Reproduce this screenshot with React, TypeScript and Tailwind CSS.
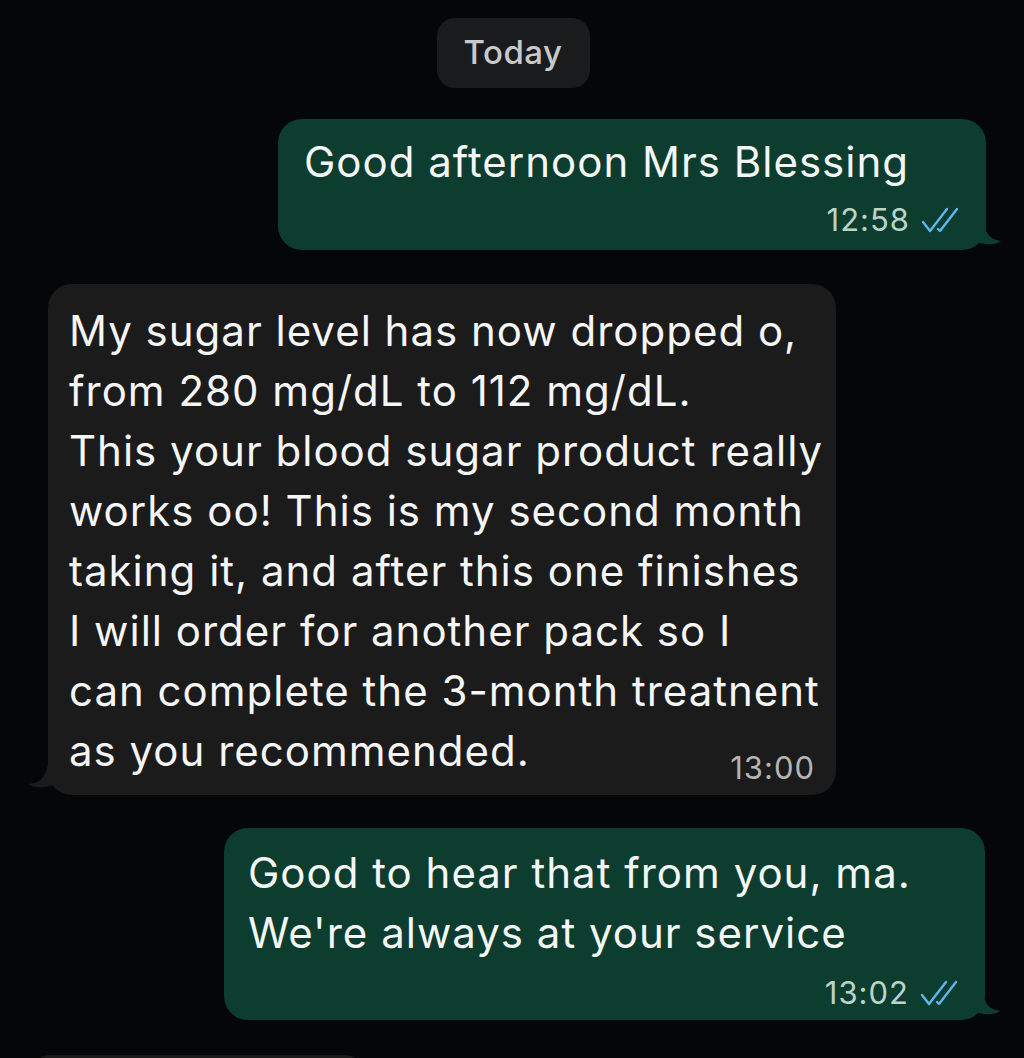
import React from "react";

const font = { fontFamily: "Inter, 'Noto Sans', 'Liberation Sans', sans-serif" };

function Checks() {
  return (
    <svg width="42" height="28" viewBox="0 0 42 28" fill="none" stroke="#5fb6ee" strokeWidth="2.4" strokeLinecap="round" strokeLinejoin="round">
      <path d="M3 16 L10 25 L27 3" />
      <path d="M18 23 L20 25 L37 3" />
    </svg>
  );
}

function TailRight({ color }: { color: string }) {
  return (
    <svg className="absolute right-[-16px] bottom-[4px]" width="30" height="36" viewBox="0 0 30 36">
      <path d="M0 0 L10 0 C10 14 14 24 20 28 C23 30 27 30 29 31 C24 35 12 36 0 30 Z" fill={color} />
    </svg>
  );
}

function TailLeft({ color }: { color: string }) {
  return (
    <svg className="absolute left-[-21px] bottom-[6px]" width="32" height="36" viewBox="0 0 32 36">
      <path d="M32 0 L22 0 C22 14 18 24 12 28 C9 30 5 30 1 31 C6 35 20 36 32 30 Z" fill={color} />
    </svg>
  );
}

export default function App() {
  return (
    <div className="w-[1024px] h-[1058px] overflow-hidden bg-[#050607] text-white" style={font}>
      <div className="flex flex-col pt-[18px]">
        <div className="flex justify-center pl-[2px]">
          <div className="h-[70px] w-[153px] rounded-[18px] bg-[#1a1b1c] flex items-center justify-center text-[33px] font-medium tracking-[0.5px] text-[#c9c9c9]">
            Today
          </div>
        </div>

        <div className="flex justify-end pr-[38px] mt-[31px]">
          <div className="relative w-[708px] h-[131px] rounded-[24px] bg-[#0c3d2f] pl-[26px] pr-[24px] pt-[13px]">
            <div className="text-[42px] tracking-[1px] leading-[60px] whitespace-nowrap text-[#f4f6f5]">Good afternoon Mrs Blessing</div>
            <div className="flex justify-end items-center gap-[10px] mt-[10px]">
              <span className="text-[31px] tracking-[1px] leading-[36px] text-[#bcd3c9]">12:58</span>
              <Checks />
            </div>
            <TailRight color="#0c3d2f" />
          </div>
        </div>

        <div className="flex justify-start pl-[48px] mt-[34px]">
          <div className="relative w-[788px] h-[511px] rounded-[24px] bg-[#1b1b1c] pl-[21px] pr-[21px] pt-[17px]">
            <div className="text-[42px] tracking-[1px] leading-[60px] whitespace-nowrap text-[#f5f5f5]">
              <div>My sugar level has now dropped o,</div>
              <div>from 280 mg/dL to 112 mg/dL.</div>
              <div>This your blood sugar product really</div>
              <div>works oo! This is my second month</div>
              <div>taking it, and after this one finishes</div>
              <div>I will order for another pack so I</div>
              <div>can complete the 3-month treatnent</div>
              <div className="flex justify-between items-end">
                <span>as you recommended.</span>
                <span className="text-[31px] tracking-[1px] leading-[40px] text-[#b4b4b4] translate-y-[7px]">13:00</span>
              </div>
            </div>
            <TailLeft color="#1b1b1c" />
          </div>
        </div>

        <div className="flex justify-end pr-[39px] mt-[33px]">
          <div className="relative w-[761px] h-[192px] rounded-[24px] bg-[#0c3d2f] pl-[24px] pr-[24px] pt-[15px]">
            <div className="text-[42px] tracking-[1px] leading-[60px] whitespace-nowrap text-[#f4f6f5]">
              <div>Good to hear that from you, ma.</div>
              <div>We're always at your service</div>
            </div>
            <div className="flex justify-end items-center gap-[10px] mt-[12px]">
              <span className="text-[31px] tracking-[1px] leading-[36px] text-[#bcd3c9]">13:02</span>
              <Checks />
            </div>
            <TailRight color="#0c3d2f" />
          </div>
        </div>

        <div className="flex justify-start pl-[30px] mt-[35px]">
          <div className="w-[335px] h-[40px] rounded-[20px] bg-[#1b1b1c]" />
        </div>
      </div>
    </div>
  );
}
